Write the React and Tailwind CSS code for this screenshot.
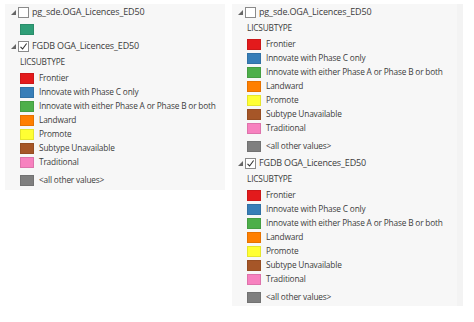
import React from "react";

const items = [
  ["#e31a1c", "Frontier"],
  ["#377eb8", "Innovate with Phase C only"],
  ["#4daf4a", "Innovate with either Phase A or Phase B or both"],
  ["#ff7f00", "Landward"],
  ["#ffff33", "Promote"],
  ["#a65628", "Subtype Unavailable"],
  ["#f781bf", "Traditional"],
];

function Tri() {
  return (
    <svg width="5" height="5" viewBox="0 0 5 5" className="shrink-0">
      <polygon points="5,0 5,5 0,5" fill="#666" />
    </svg>
  );
}

function Box({ checked }) {
  return (
    <div className="w-[11px] h-[11px] bg-white border border-[#8a8a8a] shrink-0 flex items-center justify-center">
      {checked && (
        <svg width="9" height="9" viewBox="0 0 9 9">
          <path d="M1.5 4.8 L3.6 7 L7.6 1.5" stroke="#333" strokeWidth="1.1" fill="none" />
        </svg>
      )}
    </div>
  );
}

function Layer({ name, checked }) {
  return (
    <div className="h-[14px] flex items-center pl-[6px]">
      <Tri />
      <div className="ml-[2px]"><Box checked={checked} /></div>
      <span className="ml-[3px] whitespace-nowrap text-[9px] tracking-[-0.15px]">{name}</span>
    </div>
  );
}

function Swatch({ color }) {
  return (
    <div
      className="w-[14px] h-[11px] shrink-0 border border-black/10"
      style={{ backgroundColor: color }}
    />
  );
}

function Legend() {
  return (
    <div>
      <div className="h-[14px] flex items-center pl-[15px] mt-[2px] whitespace-nowrap">LICSUBTYPE</div>
      <div className="mt-[2px]">
        {items.map(([c, t]) => (
          <div key={t} className="h-[14px] flex items-center pl-[15px]">
            <Swatch color={c} />
            <span className="ml-[5px] whitespace-nowrap">{t}</span>
          </div>
        ))}
      </div>
      <div className="h-[14px] flex items-center pl-[15px] mt-[4px]">
        <Swatch color="#7f7f7f" />
        <span className="ml-[5px] whitespace-nowrap">&lt;all other values&gt;</span>
      </div>
    </div>
  );
}

export default function App() {
  return (
    <div
      className="w-[474px] h-[322px] bg-white flex items-start text-[8.3px] tracking-[-0.17px] text-[#3c3c3c]"
      style={{ fontFamily: '"Open Sans", "Noto Sans", sans-serif' }}
    >
      <div className="ml-[5px] mt-[4px] w-[220px] h-[186px] bg-[#f7f7f7] pt-[1px]">
        <Layer name="pg_sde.OGA_Licences_ED50" />
        <div className="h-[14px] flex items-center pl-[15px] mt-[3px]">
          <Swatch color="#2f9e77" />
        </div>
        <div className="mt-[3px]">
          <Layer name="FGDB OGA_Licences_ED50" checked />
        </div>
        <Legend />
      </div>
      <div className="ml-[7px] mt-[4px] w-[231px] h-[302px] bg-[#f7f7f7] flex">
        <div className="flex-1 pt-[1px]">
          <Layer name="pg_sde.OGA_Licences_ED50" />
          <Legend />
          <div className="mt-[3px]">
            <Layer name="FGDB OGA_Licences_ED50" checked />
          </div>
          <Legend />
        </div>
        <div className="w-[6px] bg-[#f3f3f3]" />
      </div>
    </div>
  );
}
